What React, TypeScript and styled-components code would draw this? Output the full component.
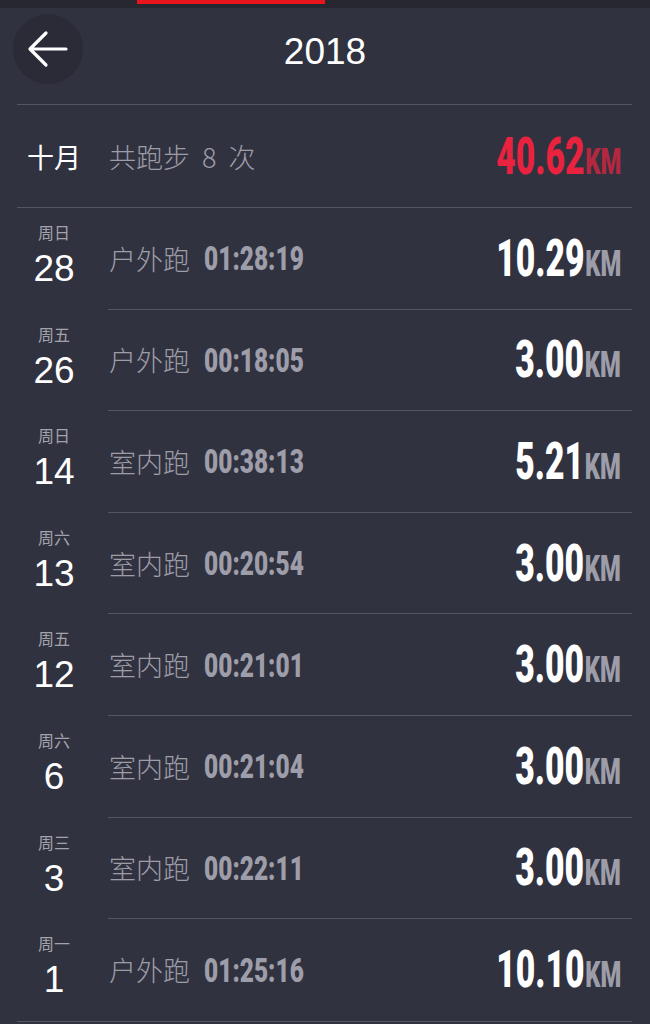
import React from 'react';
import styled, { createGlobalStyle } from 'styled-components';

const GlobalStyle = createGlobalStyle`
  html, body { margin: 0; padding: 0; background: #31323f; }
  body { font-family: "Liberation Sans", "Noto Sans CJK SC", sans-serif; }
  * { box-sizing: border-box; }
`;

const Page = styled.div`
  width: 650px;
  height: 1024px;
  overflow: hidden;
  background: #31323f;
`;

const TopStrip = styled.div`
  height: 8px;
  background: #262731;
`;

const TabIndicator = styled.div`
  margin-left: 137px;
  width: 188px;
  height: 4px;
  background: #e8141e;
`;

const Header = styled.header`
  height: 96px;
  display: grid;
  grid-template-columns: 70px 1fr 70px;
  align-items: start;
  padding: 6px 13px 0;
`;

const BackButton = styled.button`
  width: 70px;
  height: 70px;
  border-radius: 50%;
  border: none;
  padding: 0;
  background: #2a2b36;
  display: flex;
  align-items: center;
  justify-content: center;
`;

const Title = styled.h1`
  margin: 0;
  font-family: "Liberation Sans", sans-serif;
  font-weight: 400;
  font-size: 37px;
  line-height: 76px;
  color: #ffffff;
  text-align: center;
`;

const List = styled.section`
  margin: 0 18px 0 17px;
  border-top: 1px solid #555664;
  border-bottom: 1px solid #555664;
`;

const MonthRow = styled.div`
  height: 103px;
  display: grid;
  grid-template-columns: 74px 1fr auto;
  column-gap: 18px;
  align-items: center;
  padding-right: 11px;
  border-bottom: 1px solid #555664;
`;

const MonthLabel = styled.div`
  font-family: "Noto Sans CJK SC", sans-serif;
  font-size: 27px;
  color: #ffffff;
  text-align: center;
`;

const MonthSummary = styled.div`
  font-family: "Noto Sans CJK SC", sans-serif;
  font-weight: 300;
  font-size: 27px;
  word-spacing: 6px;
  color: #9d9da8;
`;

const DayRow = styled.div`
  height: 101.6px;
  display: grid;
  grid-template-columns: 74px 1fr;
  column-gap: 17px;
`;

const DateCell = styled.div`
  display: flex;
  flex-direction: column;
  align-items: center;
  padding-top: 13px;
`;

const Weekday = styled.div`
  font-family: "Noto Sans CJK SC", sans-serif;
  font-size: 16px;
  line-height: 22px;
  color: #a3a3ad;
`;

const DayNumber = styled.div`
  margin-top: 5px;
  font-family: "Liberation Sans", sans-serif;
  font-size: 37px;
  line-height: 42px;
  color: #ffffff;
`;

const RunCell = styled.div<{ $last?: boolean }>`
  display: flex;
  align-items: center;
  justify-content: space-between;
  padding: 0 11px 0 1px;
  border-bottom: ${(p) => (p.$last ? 'none' : '1px solid #555664')};
`;

const RunInfo = styled.div`
  display: flex;
  align-items: center;
`;

const RunType = styled.span`
  font-family: "Noto Sans CJK SC", sans-serif;
  font-weight: 300;
  font-size: 27px;
  color: #9d9da8;
`;

const Duration = styled.span`
  display: inline-block;
  margin-left: 14px;
  font-family: Roboto, "Liberation Sans", sans-serif;
  font-weight: 900;
  font-size: 34px;
  color: #9e9eaa;
  transform: scaleX(0.72);
  transform-origin: left center;
`;

const Distance = styled.div`
  display: flex;
  align-items: baseline;
  font-family: Roboto, "Liberation Sans", sans-serif;
  font-weight: 900;
  transform: scaleX(0.66);
  transform-origin: right center;
`;

const DistValue = styled.span<{ $accent?: boolean }>`
  font-size: 51px;
  color: ${(p) => (p.$accent ? '#e8223f' : '#ffffff')};
`;

const DistUnit = styled.span<{ $accent?: boolean }>`
  margin-left: 1px;
  font-size: 36px;
  color: ${(p) => (p.$accent ? '#b3283f' : '#9d9da9')};
`;

const BackArrow = () => (
  <svg width="46" height="46" viewBox="0 0 46 46" fill="none">
    <path
      d="M41 23H6M21 7L5 23L21 39"
      stroke="#ffffff"
      strokeWidth="3.2"
      strokeLinecap="round"
      strokeLinejoin="round"
    />
  </svg>
);

const runs = [
  { wd: '周日', day: '28', type: '户外跑', time: '01:28:19', km: '10.29' },
  { wd: '周五', day: '26', type: '户外跑', time: '00:18:05', km: '3.00' },
  { wd: '周日', day: '14', type: '室内跑', time: '00:38:13', km: '5.21' },
  { wd: '周六', day: '13', type: '室内跑', time: '00:20:54', km: '3.00' },
  { wd: '周五', day: '12', type: '室内跑', time: '00:21:01', km: '3.00' },
  { wd: '周六', day: '6', type: '室内跑', time: '00:21:04', km: '3.00' },
  { wd: '周三', day: '3', type: '室内跑', time: '00:22:11', km: '3.00' },
  { wd: '周一', day: '1', type: '户外跑', time: '01:25:16', km: '10.10' },
];

export default function App() {
  return (
    <Page>
      <GlobalStyle />
      <TopStrip>
        <TabIndicator />
      </TopStrip>
      <Header>
        <BackButton aria-label="back">
          <BackArrow />
        </BackButton>
        <Title>2018</Title>
        <div />
      </Header>
      <List>
        <MonthRow>
          <MonthLabel>十月</MonthLabel>
          <MonthSummary>共跑步 8 次</MonthSummary>
          <Distance>
            <DistValue $accent>40.62</DistValue>
            <DistUnit $accent>KM</DistUnit>
          </Distance>
        </MonthRow>
        {runs.map((r, i) => (
          <DayRow key={i}>
            <DateCell>
              <Weekday>{r.wd}</Weekday>
              <DayNumber>{r.day}</DayNumber>
            </DateCell>
            <RunCell $last={i === runs.length - 1}>
              <RunInfo>
                <RunType>{r.type}</RunType>
                <Duration>{r.time}</Duration>
              </RunInfo>
              <Distance>
                <DistValue>{r.km}</DistValue>
                <DistUnit>KM</DistUnit>
              </Distance>
            </RunCell>
          </DayRow>
        ))}
      </List>
    </Page>
  );
}
